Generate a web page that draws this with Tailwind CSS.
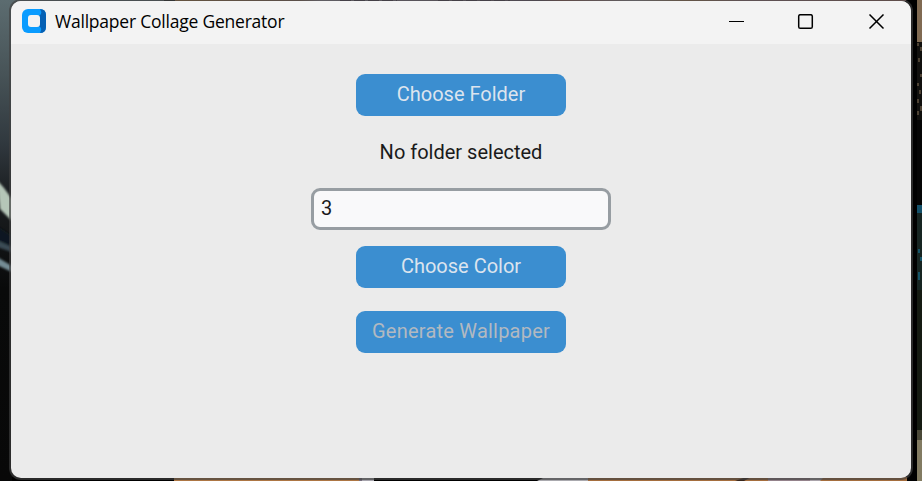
<!DOCTYPE html>
<html lang="en">
<head>
<meta charset="utf-8">
<title>Wallpaper Collage Generator</title>
<script src="https://cdn.jsdelivr.net/npm/@tailwindcss/browser@4"></script>
</head>
<body class="relative h-[481px] w-[922px] overflow-hidden bg-black font-['Roboto',sans-serif]">
  <!-- Desktop wallpaper behind the window -->
  <svg class="absolute inset-0" width="922" height="481" viewBox="0 0 922 481" aria-hidden="true">
    <defs>
      <linearGradient id="left" x1="0" y1="0" x2="0" y2="1">
        <stop offset="0" stop-color="#5c6c70"/><stop offset=".15" stop-color="#485458"/><stop offset=".3" stop-color="#30383e"/><stop offset=".4" stop-color="#1c1f22"/><stop offset=".6" stop-color="#090a0a"/><stop offset="1" stop-color="#080808"/>
      </linearGradient>
      <linearGradient id="top" x1="0" y1="0" x2="1" y2="0">
        <stop offset="0" stop-color="#a8753f"/><stop offset=".17" stop-color="#8a6a58"/><stop offset=".2" stop-color="#9993a3"/><stop offset=".5" stop-color="#66566a"/><stop offset=".53" stop-color="#986058"/><stop offset=".63" stop-color="#9c97a0"/><stop offset=".7" stop-color="#a57a50"/><stop offset=".78" stop-color="#947078"/><stop offset="1" stop-color="#99665d"/>
      </linearGradient>
      <filter id="soft" x="-50%" y="-20%" width="200%" height="140%"><feGaussianBlur stdDeviation="1.2"/></filter>
    </defs>
    <rect width="175" height="481" fill="url(#left)"/>
    <g filter="url(#soft)">
      <path d="M-3 180L4 188L12 199V221L0 209Z" fill="#b5c6b8"/>
      <path d="M-3 226L12 236V254L-3 241Z" fill="#101820"/>
      <path d="M-3 240L12 247V252L-3 247Z" fill="#3b4c54"/>
      <path d="M-3 257L12 266V272L-3 265Z" fill="#748c94"/>
    </g>
    <rect x="164" width="11" height="1" fill="#1d2022"/>
    <rect x="175" width="731" height="1" fill="url(#top)"/>
    <path d="M340 .5H397M438 .5H510" stroke="#4a4054" stroke-dasharray="11 3"/>
    <rect x="12" y="477" width="162" height="4" fill="#000"/>
    <rect x="174" y="477" width="185" height="4" fill="#ad7644"/>
    <rect x="359" y="477" width="3" height="4" fill="#756d7b"/>
    <rect x="362" y="477" width="12" height="4" fill="#a7a5ad"/>
    <rect x="374" y="477" width="163" height="4" fill="#000"/>
    <path d="M537 481L545 477H588V481Z" fill="#aaa9ae"/>
    <rect x="588" y="477" width="320" height="4" fill="#a56e3e"/>
    <path d="M735 481L746 477H751L744 481Z" fill="#38261b"/>
    <rect x="768" y="477" width="42" height="4" fill="#94828b"/>
    <path d="M810 477H824L820 481H810Z" fill="#aaa3aa"/>
    <rect x="907" width="15" height="481" fill="#000"/>
    <rect x="917" width="5" height="42" fill="#806a52"/>
    <rect x="917" y="42" width="5" height="78" fill="#11100e"/>
    <path d="M918 43v3M921 47v4M919 58v4M921 74v3M918 83v3M920 90v4M918 99v4M921 106v5M918 111v4" stroke="#75624d" stroke-opacity=".6" stroke-width="2"/>
    <rect x="917" y="120" width="5" height="85" fill="#050505"/>
    <rect x="917" y="205" width="5" height="8" fill="#14516a"/>
    <rect x="917" y="213" width="5" height="77" fill="#172522"/>
    <path d="M919 249v4M921 257v4M919 272v8" stroke="#155468" stroke-width="2"/>
    <rect x="917" y="290" width="5" height="140" fill="#151b12"/>
    <rect x="917" y="430" width="5" height="10" fill="#4a4838"/>
    <rect x="917" y="440" width="5" height="41" fill="#827b62"/>
  </svg>

  <!-- Application window -->
  <main class="relative mt-px ml-[11px] flex h-[477px] w-[900px] flex-col rounded-[10px] bg-[#ebebeb] shadow-[0_0_0_2px_rgba(65,65,65,0.65)]">
    <header class="flex h-[43px] shrink-0 items-center rounded-t-[10px] bg-[#f3f3f3] pl-[11px]">
      <svg class="-mt-[3px] shrink-0" width="24" height="24" viewBox="0 0 24 24" aria-hidden="true">
        <rect width="24" height="24" rx="6" fill="#0a9cff"/>
        <path d="M18 0Q24 0 24 6V18Q24 24 18 24Q20 21 19 19L17 17V7L19 5Q20 3 18 0Z" fill="#0560b4"/>
        <rect x="6" y="6" width="12" height="12" rx="3" fill="#f3f3f3"/>
      </svg>
      <h1 class="-mt-1 ml-[9px] w-[300px] whitespace-nowrap font-['Open_Sans',sans-serif] text-[17.5px] leading-6 tracking-[-0.22px] text-black">Wallpaper Collage Generator</h1>
      <div class="-mt-0.5 ml-auto flex pr-[26px]">
        <svg width="156" height="16" viewBox="0 0 156 16" fill="none" stroke="#000" aria-hidden="true">
          <path d="M0 7.5H15"/>
          <rect x="69.7" y=".7" width="13.6" height="13.6" rx="1.6" stroke-width="1.5"/>
          <path d="M140.5 .5L154.5 14.5M154.5 .5L140.5 14.5" stroke-width="1.5"/>
        </svg>
      </div>
    </header>
    <section class="flex flex-col items-center pt-[30px]">
      <button class="h-[42px] w-[210px] rounded-[9px] bg-[#3b8ed0] pb-[3px] text-xl text-[#dce4ee]">Choose Folder</button>
      <p class="mt-[22px] h-7 text-xl leading-7 text-[#1a1a1a]">No folder selected</p>
      <input aria-label="Number of columns" value="3" class="mt-[22px] h-[42px] w-[300px] rounded-[9px] border-[3px] border-[#979da2] bg-[#f9f9fa] px-[7px] pb-[3px] text-xl text-[#1a1a1a] outline-none">
      <button class="mt-4 h-[42px] w-[210px] rounded-[9px] bg-[#3b8ed0] pb-[3px] text-xl text-[#dce4ee]">Choose Color</button>
      <button disabled class="mt-[23px] h-[42px] w-[210px] rounded-[9px] bg-[#3b8ed0] pb-[3px] text-xl tracking-[0.22px] whitespace-nowrap text-[#b2b9c1]">Generate Wallpaper</button>
    </section>
  </main>
</body>
</html>
